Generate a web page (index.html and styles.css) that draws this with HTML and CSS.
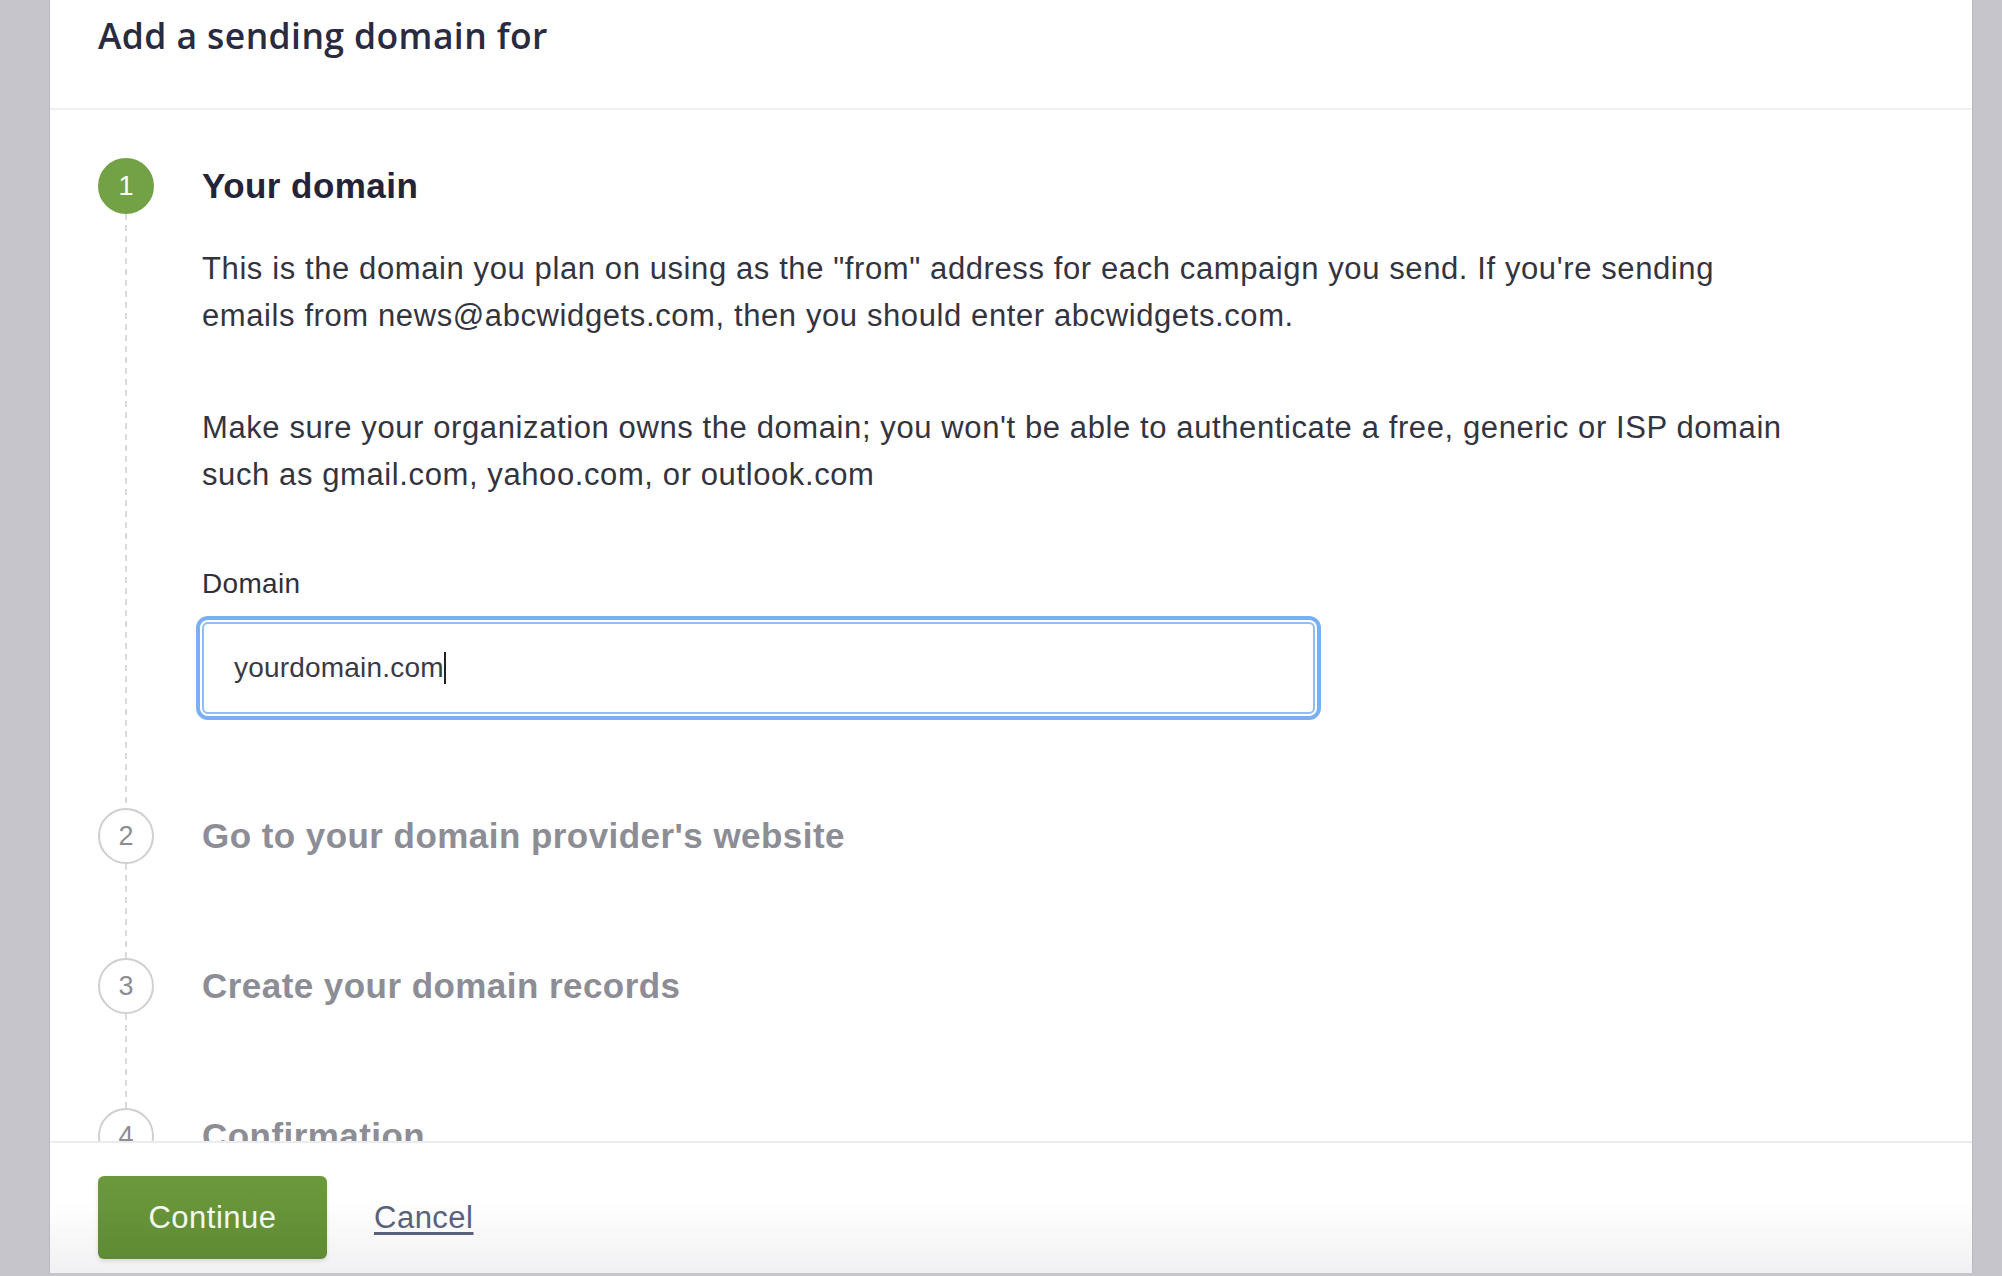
FILE: index.html
```html
<!DOCTYPE html>
<html lang="en">
<head>
<meta charset="utf-8">
<title>Add a sending domain</title>
<link rel="stylesheet" href="styles.css">
</head>
<body>
<div class="modal">
  <header class="modal-header">
    <h1 class="modal-title">Add a sending domain for</h1>
  </header>
  <main class="modal-body">
    <section class="step step-active">
      <div class="step-rail">
        <span class="step-num">1</span>
        <span class="step-line"></span>
      </div>
      <div class="step-content">
        <h2 class="step-title">Your domain</h2>
        <p class="step-text">This is the domain you plan on using as the "from" address for each campaign you send. If you're sending emails from news@abcwidgets.com, then you should enter abcwidgets.com.</p>
        <p class="step-text step-text-2">Make sure your organization owns the domain; you won't be able to authenticate a free, generic or ISP domain such as gmail.com, yahoo.com, or outlook.com</p>
        <label class="field-label">Domain</label>
        <div class="field-input"><span class="field-value">yourdomain.com</span><span class="caret"></span></div>
      </div>
    </section>
    <section class="step">
      <div class="step-rail">
        <span class="step-num">2</span>
        <span class="step-line"></span>
      </div>
      <div class="step-content">
        <h2 class="step-title">Go to your domain provider's website</h2>
      </div>
    </section>
    <section class="step">
      <div class="step-rail">
        <span class="step-num">3</span>
        <span class="step-line"></span>
      </div>
      <div class="step-content">
        <h2 class="step-title">Create your domain records</h2>
      </div>
    </section>
    <section class="step">
      <div class="step-rail">
        <span class="step-num">4</span>
        <span class="step-line"></span>
      </div>
      <div class="step-content">
        <h2 class="step-title">Confirmation</h2>
      </div>
    </section>
  </main>
  <footer class="modal-footer">
    <button class="btn-continue" type="button">Continue</button>
    <a class="link-cancel" href="#">Cancel</a>
  </footer>
</div>
</body>
</html>
```
FILE: styles.css
```css
html, body {
  margin: 0;
  padding: 0;
}
body {
  width: 2002px;
  height: 1276px;
  overflow: hidden;
  background: #c5c5cb;
  font-family: "Liberation Sans", Arial, sans-serif;
}
.modal {
  margin-left: 50px;
  width: 1922px;
  height: 1273px;
  background: #ffffff;
  display: flex;
  flex-direction: column;
  box-shadow: -1px 0 0 #b9b9bf, 1px 0 0 #b9b9bf;
}
.modal-header {
  flex: none;
  height: 108px;
  border-bottom: 2px solid #eff0f4;
  padding-left: 48px;
  display: flex;
  align-items: center;
  box-sizing: content-box;
}
.modal-title {
  margin: 0;
  margin-top: -38px;
  font-family: "Open Sans", "Liberation Sans", sans-serif;
  font-weight: 600;
  font-size: 35.5px;
  color: #2a2a40;
  letter-spacing: 0.4px;
}
.modal-body {
  flex: 1;
  overflow: hidden;
  padding: 48px 0 0 48px;
}
.step {
  display: grid;
  grid-template-columns: 56px 1fr;
  column-gap: 48px;
}
.step-rail {
  display: flex;
  flex-direction: column;
  align-items: center;
}
.step-num {
  flex: none;
  width: 56px;
  height: 56px;
  box-sizing: border-box;
  border-radius: 50%;
  border: 2px solid #cfcfd4;
  background: #fff;
  color: #8d8d95;
  font-size: 27px;
  display: flex;
  align-items: center;
  justify-content: center;
}
.step-active .step-num {
  background: #73a146;
  border-color: #73a146;
  color: #ffffff;
}
.step-line {
  flex: 1;
  width: 2px;
  background: repeating-linear-gradient(to bottom, #d9d9de 0 6px, transparent 6px 11px);
}
.step-content {
  padding-bottom: 94px;
}
.step-title {
  margin: 0;
  height: 56px;
  line-height: 56px;
  font-size: 35px;
  font-weight: 700;
  letter-spacing: 0.45px;
  color: #8d8d95;
}
.step-active .step-title {
  color: #23233a;
}
.step-text {
  margin: 31px 0 0;
  max-width: 1580px;
  font-size: 31px;
  line-height: 47px;
  letter-spacing: 0.6px;
  color: #34343f;
}
.step-text-2 {
  margin-top: 65px;
}
.field-label {
  display: block;
  margin-top: 69px;
  font-size: 28px;
  line-height: 34px;
  letter-spacing: 0.3px;
  color: #2f2f3b;
}
.field-input {
  margin-top: 21px;
  width: 1113px;
  height: 92px;
  box-sizing: border-box;
  border: 2px solid #93bbf4;
  border-radius: 6px;
  box-shadow: 0 0 0 2px #ffffff, 0 0 0 6px #7aaef5;
  padding-left: 30px;
  display: flex;
  align-items: center;
  font-size: 28px;
  color: #3a3a46;
  letter-spacing: 0.2px;
}
.caret {
  display: inline-block;
  width: 2px;
  height: 32px;
  background: #222;
}
.modal-footer {
  flex: none;
  height: 132px;
  box-sizing: border-box;
  border-top: 2px solid #ececf0;
  background: linear-gradient(to bottom, #ffffff 0%, #ffffff 45%, #f1f1f3 100%);
  padding: 33px 0 0 48px;
  display: flex;
  align-items: flex-start;
  gap: 47px;
}
.btn-continue {
  width: 229px;
  height: 83px;
  border: none;
  border-radius: 6px;
  background: linear-gradient(to bottom, #6d993d, #5e8b33);
  color: #f4f8ef;
  font-family: "Liberation Sans", Arial, sans-serif;
  font-size: 31px;
  letter-spacing: 0.5px;
  box-shadow: 0 2px 4px rgba(0,0,0,0.12);
}
.link-cancel {
  line-height: 83px;
  font-size: 31px;
  letter-spacing: 0.5px;
  color: #5a617b;
  text-decoration: underline;
  text-underline-offset: 4px;
}
```
